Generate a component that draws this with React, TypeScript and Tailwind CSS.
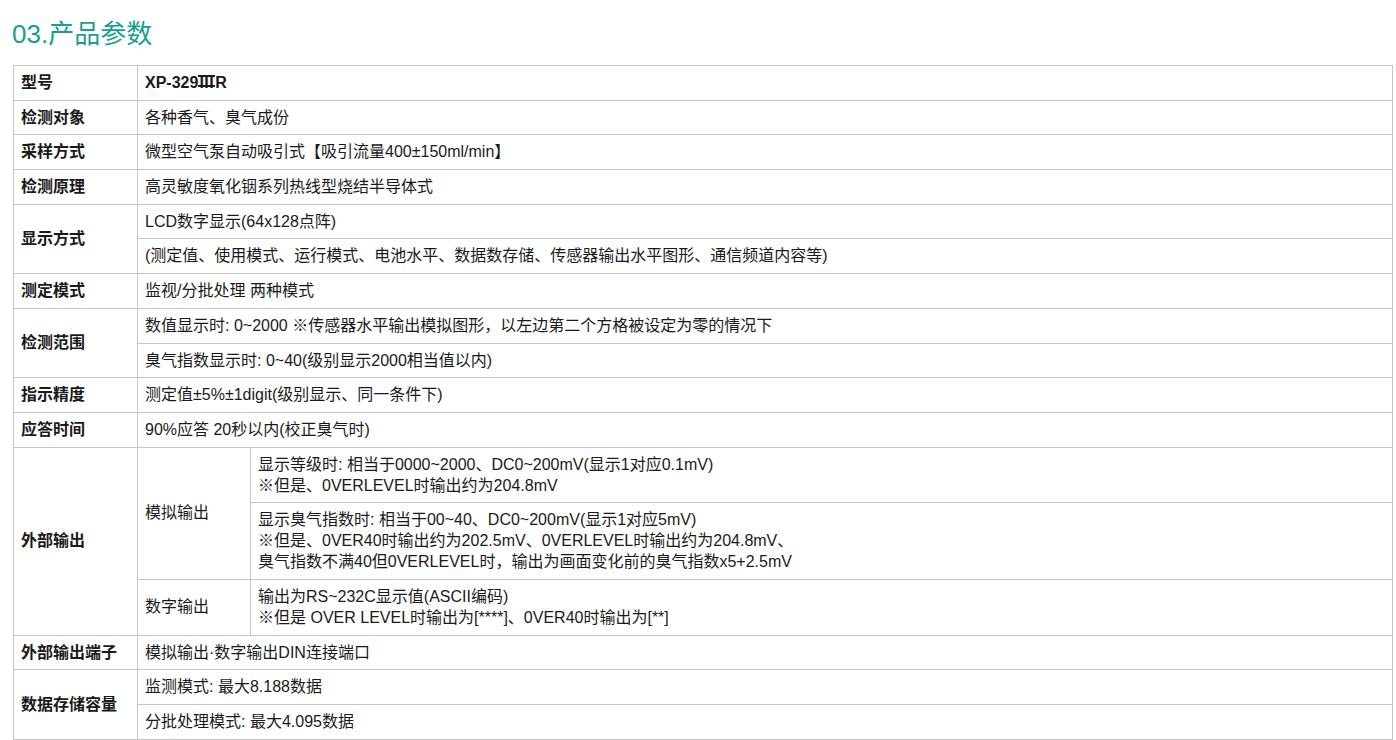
import React from "react";

const td = "border border-[#c6c6c6] px-[7px] pt-[6px] pb-[6.7px] align-middle";
const th = td + " font-bold";

function Roman3() {
  return (
    <span className="relative inline-block tracking-[0.5px] px-[1px]">
      III
      <span className="absolute left-0 right-0 top-[3px] h-[2px] bg-[#1a1a1a]" />
      <span className="absolute left-0 right-0 top-[12.5px] h-[2px] bg-[#1a1a1a]" />
    </span>
  );
}

export default function App() {
  return (
    <div
      className="w-[1396px] h-[740px] bg-white overflow-hidden text-[#1a1a1a]"
      style={{ fontFamily: '"Liberation Sans", "Noto Sans CJK SC", sans-serif' }}
    >
      <h2 className="pl-[12px] pt-[16px] h-[65px] text-[26px] leading-[36px] text-[#17a08b]">03.产品参数</h2>
      <table className="ml-[13px] w-[1380px] border-collapse text-[16px] leading-[21px] table-fixed">
        <colgroup>
          <col className="w-[124px]" />
          <col className="w-[113px]" />
          <col />
        </colgroup>
        <tbody>
          <tr>
            <td className={th}>型号</td>
            <td className={th} colSpan={2}>
              XP-329<Roman3 />R
            </td>
          </tr>
          <tr>
            <td className={th}>检测对象</td>
            <td className={td} colSpan={2}>各种香气、臭气成份</td>
          </tr>
          <tr>
            <td className={th}>采样方式</td>
            <td className={td} colSpan={2}>微型空气泵自动吸引式【吸引流量400±150ml/min】</td>
          </tr>
          <tr>
            <td className={th}>检测原理</td>
            <td className={td} colSpan={2}>高灵敏度氧化铟系列热线型烧结半导体式</td>
          </tr>
          <tr>
            <td className={th} rowSpan={2}>显示方式</td>
            <td className={td} colSpan={2}>LCD数字显示(64x128点阵)</td>
          </tr>
          <tr>
            <td className={td} colSpan={2}>(测定值、使用模式、运行模式、电池水平、数据数存储、传感器输出水平图形、通信频道内容等)</td>
          </tr>
          <tr>
            <td className={th}>测定模式</td>
            <td className={td} colSpan={2}>监视/分批处理 两种模式</td>
          </tr>
          <tr>
            <td className={th} rowSpan={2}>检测范围</td>
            <td className={td} colSpan={2}>数值显示时: 0~2000 ※传感器水平输出模拟图形，以左边第二个方格被设定为零的情况下</td>
          </tr>
          <tr>
            <td className={td} colSpan={2}>臭气指数显示时: 0~40(级别显示2000相当值以内)</td>
          </tr>
          <tr>
            <td className={th}>指示精度</td>
            <td className={td} colSpan={2}>测定值±5%±1digit(级别显示、同一条件下)</td>
          </tr>
          <tr>
            <td className={th}>应答时间</td>
            <td className={td} colSpan={2}>90%应答 20秒以内(校正臭气时)</td>
          </tr>
          <tr>
            <td className={th} rowSpan={3}>外部输出</td>
            <td className={td} rowSpan={2}>模拟输出</td>
            <td className={td}>
              显示等级时: 相当于0000~2000、DC0~200mV(显示1对应0.1mV)
              <br />
              ※但是、0VERLEVEL时输出约为204.8mV
            </td>
          </tr>
          <tr>
            <td className={td}>
              显示臭气指数时: 相当于00~40、DC0~200mV(显示1对应5mV)
              <br />
              ※但是、0VER40时输出约为202.5mV、0VERLEVEL时输出约为204.8mV、
              <br />
              臭气指数不满40但0VERLEVEL时，输出为画面变化前的臭气指数x5+2.5mV
            </td>
          </tr>
          <tr>
            <td className={td}>数字输出</td>
            <td className={td}>
              输出为RS~232C显示值(ASCII编码)
              <br />
              ※但是 OVER LEVEL时输出为[****]、0VER40时输出为[**]
            </td>
          </tr>
          <tr>
            <td className={th}>外部输出端子</td>
            <td className={td} colSpan={2}>模拟输出·数字输出DIN连接端口</td>
          </tr>
          <tr>
            <td className={th} rowSpan={2}>数据存储容量</td>
            <td className={td} colSpan={2}>监测模式: 最大8.188数据</td>
          </tr>
          <tr>
            <td className={td} colSpan={2}>分批处理模式: 最大4.095数据</td>
          </tr>
        </tbody>
      </table>
    </div>
  );
}
